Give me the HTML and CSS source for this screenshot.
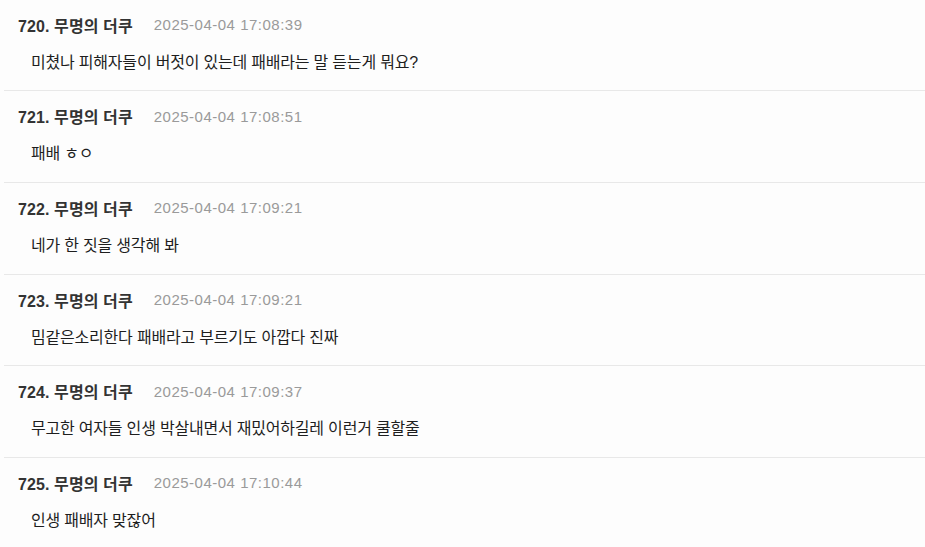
FILE: index.html
```html
<!DOCTYPE html>
<html lang="ko">
<head>
<meta charset="utf-8">
<title>댓글</title>
<link rel="stylesheet" href="styles.css">
</head>
<body>
<ul class="comments">
  <li class="comment">
    <div class="meta"><span class="author">720. 무명의 더쿠</span><span class="date">2025-04-04 17:08:39</span></div>
    <p class="text">미쳤나 피해자들이 버젓이 있는데 패배라는 말 듣는게 뭐요?</p>
  </li>
  <li class="comment">
    <div class="meta"><span class="author">721. 무명의 더쿠</span><span class="date">2025-04-04 17:08:51</span></div>
    <p class="text">패배 ㅎㅇ</p>
  </li>
  <li class="comment">
    <div class="meta"><span class="author">722. 무명의 더쿠</span><span class="date">2025-04-04 17:09:21</span></div>
    <p class="text">네가 한 짓을 생각해 봐</p>
  </li>
  <li class="comment">
    <div class="meta"><span class="author">723. 무명의 더쿠</span><span class="date">2025-04-04 17:09:21</span></div>
    <p class="text">밈같은소리한다 패배라고 부르기도 아깝다 진짜</p>
  </li>
  <li class="comment">
    <div class="meta"><span class="author">724. 무명의 더쿠</span><span class="date">2025-04-04 17:09:37</span></div>
    <p class="text">무고한 여자들 인생 박살내면서 재밌어하길레 이런거 쿨할줄</p>
  </li>
  <li class="comment">
    <div class="meta"><span class="author">725. 무명의 더쿠</span><span class="date">2025-04-04 17:10:44</span></div>
    <p class="text">인생 패배자 맞잖어</p>
  </li>
</ul>
</body>
</html>
```

FILE: styles.css
```css
html, body {
  margin: 0;
  padding: 0;
  background: #fdfdfd;
}
body {
  font-family: "Liberation Sans", "Noto Sans CJK KR", sans-serif;
  color: #222;
}
.comments {
  list-style: none;
  margin: 0 0 0 4px;
  padding: 0;
}
.comment {
  padding: 15px 0 17.7px 0;
  border-bottom: 1px solid #e8e8e8;
}
.comment:first-child {
  padding-top: 14.5px;
}
.meta {
  display: flex;
  align-items: center;
  gap: 21px;
  padding-left: 14px;
  height: 20px;
}
.author {
  font-weight: 700;
  font-size: 16px;
  color: #333;
  letter-spacing: 0.1px;
}
.date {
  font-size: 15px;
  color: #9a9a9a;
  letter-spacing: 0.5px;
}
.text {
  margin: 18px 0 0 0;
  padding-left: 27px;
  font-size: 16px;
  line-height: 20px;
  color: #1e1e1e;
  letter-spacing: -0.2px;
}
```
